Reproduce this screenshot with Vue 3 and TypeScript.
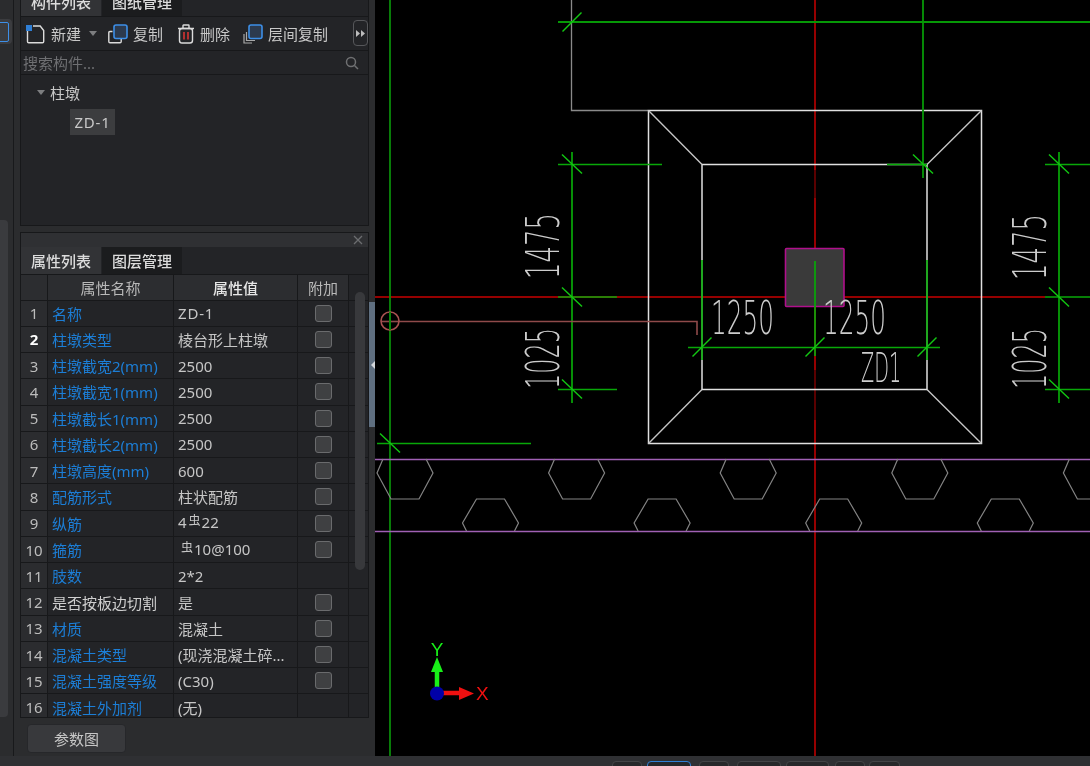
<script setup lang="ts">
interface Prop {
  name: string
  value: string
  blue: boolean
  check: boolean
  bar?: string
}

const props: Prop[] = [
  { name: '名称', value: 'ZD-1', blue: true, check: true },
  { name: '柱墩类型', value: '棱台形上柱墩', blue: true, check: true },
  { name: '柱墩截宽2(mm)', value: '2500', blue: true, check: true },
  { name: '柱墩截宽1(mm)', value: '2500', blue: true, check: true },
  { name: '柱墩截长1(mm)', value: '2500', blue: true, check: true },
  { name: '柱墩截长2(mm)', value: '2500', blue: true, check: true },
  { name: '柱墩高度(mm)', value: '600', blue: true, check: true },
  { name: '配筋形式', value: '柱状配筋', blue: true, check: true },
  { name: '纵筋', bar: '4', value: '22', blue: true, check: true },
  { name: '箍筋', bar: '', value: '10@100', blue: true, check: true },
  { name: '肢数', value: '2*2', blue: true, check: false },
  { name: '是否按板边切割', value: '是', blue: false, check: true },
  { name: '材质', value: '混凝土', blue: true, check: true },
  { name: '混凝土类型', value: '(现浇混凝土碎...', blue: true, check: true },
  { name: '混凝土强度等级', value: '(C30)', blue: true, check: true },
  { name: '混凝土外加剂', value: '(无)', blue: true, check: false },
]

// 六角形の穴（上段・下段）
const topHex = [405, 576.6, 748.2, 919.8, 1091.4]
const bottomHex = [490.5, 662.1, 833.7, 1005.3]

const hexTop = (c: number) =>
  `${c - 22},459 ${c - 28},473 ${c - 14},499 ${c + 14},499 ${c + 28},473 ${c + 21},459`
const hexBottom = (c: number) =>
  `${c - 24},531 ${c - 28},523 ${c - 14},499 ${c + 14},499 ${c + 28},523 ${c + 24},531`

const ticksBack = [
  [572, 164], [572, 297], [572, 389],
  [1059, 164], [1059, 297], [1059, 389],
  [923, 164], [390, 443],
]
const ticksFwd = [
  [702, 347], [815, 347], [927, 347], [572, 22],
]
const statusBtns = [
  { on: false }, { on: true }, { on: false }, { on: false },
  { on: false }, { on: false }, { on: false },
]
</script>

<template>
  <div class="app">
    <div class="main">
      <aside class="strip">
        <div class="strip-btn">
          <span class="strip-icon"></span>
        </div>
        <div class="strip-thumb"></div>
      </aside>

      <div class="side">
        <section class="panel panel-top">
          <div class="tabs tabs-cut">
            <span class="tab active">构件列表</span>
            <span class="tab">图纸管理</span>
          </div>
          <div class="toolbar">
            <span class="tool tool-new">
              <svg width="20" height="20" viewBox="0 0 20 20" fill="none">
                <path d="M2.5 6V17.5Q2.5 18.7 3.7 18.7H17.5Q18.7 18.7 18.7 17.5V6.5L15.2 2H8" stroke="#dcdcdc" stroke-width="1.4" />
                <rect x="1" y="1" width="6" height="6" fill="#2f7fd6" />
              </svg>
              新建
              <i class="caret"></i>
            </span>
            <span class="tool tool-copy">
              <svg width="20" height="20" viewBox="0 0 20 20" fill="none">
                <path d="M4.5 7.5H2Q0.8 7.5 0.8 8.7V17.5Q0.8 18.8 2 18.8H12Q13.2 18.8 13.2 17.5V15" stroke="#dcdcdc" stroke-width="1.4" />
                <rect x="6" y="1" width="13" height="13.5" rx="2" fill="#2c3a4e" stroke="#3d8fe8" stroke-width="1.6" />
              </svg>
              复制
            </span>
            <span class="tool tool-del">
              <svg width="18" height="20" viewBox="0 0 18 20" fill="none">
                <path d="M1 4.5H17M6 4V1.5Q6 1 6.5 1H11.5Q12 1 12 1.5V4" stroke="#dcdcdc" stroke-width="1.4" />
                <rect x="2.5" y="4.5" width="13" height="14.5" rx="2.5" stroke="#dcdcdc" stroke-width="1.4" />
                <path d="M7 8V15.5M11 8V15.5" stroke="#c23232" stroke-width="1.8" />
              </svg>
              删除
            </span>
            <span class="tool tool-layer">
              <svg width="20" height="20" viewBox="0 0 20 20" fill="none">
                <path d="M3.5 8V16.5H12M1 10V19H9" stroke="#a8a8a8" stroke-width="1.2" />
                <rect x="6" y="1" width="13" height="13.5" rx="2" fill="#2c3a4e" stroke="#3d8fe8" stroke-width="1.6" />
              </svg>
              层间复制
            </span>
            <span class="more">
              <svg width="9" height="7" viewBox="0 0 9 7"><path d="M0 0L4 3.5L0 7ZM5 0L9 3.5L5 7Z" fill="#bdbdbd" /></svg>
            </span>
          </div>
          <div class="search">
            <span class="search-text">搜索构件...</span>
            <svg width="14" height="14" viewBox="0 0 14 14" fill="none">
              <circle cx="6" cy="6" r="4.5" stroke="#6f7072" stroke-width="1.5" />
              <path d="M9.5 9.5L13 13" stroke="#6f7072" stroke-width="1.5" />
            </svg>
          </div>
          <div class="tree">
            <div class="tree-root"><i class="caret"></i>柱墩</div>
            <div class="tree-leaf"><span>ZD-1</span></div>
          </div>
        </section>

        <section class="panel panel-bottom">
          <div class="panel-head">
            <svg width="10" height="10" viewBox="0 0 10 10"><path d="M1 1L9 9M9 1L1 9" stroke="#6c6d70" stroke-width="1.3" /></svg>
          </div>
          <div class="tabs">
            <span class="tab active">属性列表</span>
            <span class="tab">图层管理</span>
          </div>
          <div class="table">
            <div class="row head">
              <div class="c-i"></div>
              <div class="c-n">属性名称</div>
              <div class="c-v">属性值</div>
              <div class="c-a">附加</div>
              <div class="c-s"></div>
            </div>
            <div v-for="(p, i) in props" :key="p.name" class="row">
              <div class="c-i" :class="{ cur: i === 1 }">{{ i + 1 }}</div>
              <div class="c-n" :class="{ blue: p.blue }">{{ p.name }}</div>
              <div class="c-v" :class="{ raised: p.bar !== undefined, wide: i === 0 }">
                <template v-if="p.bar !== undefined">{{ p.bar }}<span class="rebar" :class="{ lead: !p.bar }">虫</span></template>{{ p.value }}
              </div>
              <div class="c-a"><span v-if="p.check" class="check"></span></div>
              <div class="c-s"></div>
            </div>
            <div class="v-thumb"></div>
          </div>
          <div class="panel-foot">
            <button class="param-btn" type="button">参数图</button>
          </div>
        </section>
      </div>

      <div class="splitter">
        <div class="split-handle"><i></i></div>
      </div>

      <div class="canvas">
        <svg class="cad" width="715" height="756" viewBox="375 0 715 756" fill="none">
          <!-- 梁の外形 -->
          <path d="M571.5 0V110.5H648" stroke="#8a8a8a" stroke-width="1.3" />

          <!-- 軸線 -->
          <path d="M375 297H785M844 297H1045" stroke="#960000" stroke-width="2" />
          <path d="M815 0V756" stroke="#960000" stroke-width="2" />
          <path d="M815 170V198M815 370V420" stroke="#5a0000" stroke-width="2" />

          <!-- 柱墩 -->
          <rect x="648.5" y="110.5" width="333" height="333" stroke="#e0e0e0" stroke-width="1.5" />
          <rect x="702" y="164.5" width="225" height="225" stroke="#e0e0e0" stroke-width="1.5" />
          <path d="M648.5 110.5L702 164.5M981.5 110.5L927 164.5M648.5 443.5L702 389.5M981.5 443.5L927 389.5" stroke="#c4c4c4" stroke-width="1.4" />
          <rect x="785.5" y="248.5" width="58.5" height="58" rx="1" fill="#3a3a3a" stroke="#b0108c" stroke-width="1.6" />

          <!-- 寸法線 -->
          <path d="M558 22H1090" stroke="#069806" stroke-width="1.8" />
          <path d="M390 0V756" stroke="#0a8a0a" stroke-width="1.8" />
          <path d="M923 0V178" stroke="#069806" stroke-width="1.8" />
          <path d="M887 164.5H927" stroke="#08b008" stroke-width="1.5" />
          <path d="M572 152V403M558 164.5H662M558 297H617M558 389.5H617" stroke="#08a808" stroke-width="1.7" />
          <path d="M1059 152V403M1045 164.5H1090M1045 297H1090M1045 389.5H1090" stroke="#08a808" stroke-width="1.7" />
          <path d="M688 347.5H940" stroke="#08a808" stroke-width="1.6" />
          <path d="M702 260V360M927 260V360M815 261V356" stroke="#08a808" stroke-width="1.7" />
          <path d="M377 443.5H531" stroke="#08a808" stroke-width="1.6" />
          <path v-for="t in ticksBack" :key="'b' + t[0] + t[1]" :d="`M${t[0] - 10} ${t[1] - 9.5}L${t[0] + 10} ${t[1] + 9.5}`" stroke="#12c812" stroke-width="1.4" />
          <path v-for="t in ticksFwd" :key="'f' + t[0] + t[1]" :d="`M${t[0] - 9.5} ${t[1] + 9.5}L${t[0] + 9.5} ${t[1] - 9.5}`" stroke="#12c812" stroke-width="1.4" />

          <!-- 引出線 -->
          <path d="M399 321.5H697V335" stroke="#8f4a4a" stroke-width="1.6" />
          <path d="M381 321.5H399" stroke="#8f4a4a" stroke-width="1.6" />
          <circle cx="390" cy="321" r="9" stroke="#a85050" stroke-width="1.6" />
          <path d="M390 312V330" stroke="#0a8a0a" stroke-width="1.8" />

          <!-- スラブの線 -->
          <path d="M375 459.5H1090M375 531.5H1090" stroke="#a060b4" stroke-width="1.6" />
          <polyline v-for="c in topHex" :key="'t' + c" :points="hexTop(c)" stroke="#848484" stroke-width="1.2" />
          <polyline v-for="c in bottomHex" :key="'u' + c" :points="hexBottom(c)" stroke="#848484" stroke-width="1.2" />

          <!-- 寸法文字 -->
          <text class="dim" transform="translate(711 334) scale(1.03 1.95)">1250</text>
          <text class="dim" transform="translate(823 334) scale(1.03 1.95)">1250</text>
          <text class="dim" transform="translate(861 382) scale(0.8 1.7)">ZD1</text>
          <text class="dim" transform="translate(559 279) rotate(-90) scale(1.08 1.95)">1475</text>
          <text class="dim" transform="translate(559 389) rotate(-90) scale(1 1.95)">1025</text>
          <text class="dim" transform="translate(1046 280) rotate(-90) scale(1.08 1.95)">1475</text>
          <text class="dim" transform="translate(1046 389) rotate(-90) scale(1 1.95)">1025</text>

          <!-- 座標軸 -->
          <path d="M437 693V668" stroke="#18f018" stroke-width="4.5" />
          <path d="M437 657L431 672H443Z" fill="#18f018" />
          <path d="M437 693H461" stroke="#f01010" stroke-width="4.5" />
          <path d="M474 693.5L459 687V700Z" fill="#f01010" />
          <circle cx="437" cy="693.5" r="7" fill="#0000a8" />
          <text class="axis-y" x="437" y="656">Y</text>
          <text class="axis-x" x="476" y="700">X</text>
        </svg>
      </div>
    </div>

    <footer class="status">
      <span v-for="(b, i) in statusBtns" :key="i" class="status-btn" :class="[{ on: b.on }, `s${i}`]"></span>
    </footer>
  </div>
</template>

<style>
html,
body {
  margin: 0;
  background: #2b2c2e;
}
</style>

<style scoped>
.app {
  width: 1090px;
  height: 766px;
  overflow: hidden;
  display: flex;
  flex-direction: column;
  background: #2b2c2e;
  font-family: "Noto Sans", "Noto Sans CJK SC", "Liberation Sans", sans-serif;
  font-size: 15px;
  color: #cfcfcf;
  filter: blur(0.3px);
}

.main {
  flex: 1;
  min-height: 0;
  display: flex;
}

/* left strip */
.strip {
  position: relative;
  width: 14px;
  flex: none;
  border-right: 1px solid #18191b;
  box-sizing: border-box;
}
.strip-btn {
  margin-top: 19px;
  width: 12px;
  height: 25px;
  background: #3b3c3f;
  border-radius: 0 4px 4px 0;
  overflow: hidden;
}
.strip-icon {
  display: block;
  width: 11px;
  height: 18px;
  margin: 3px 0 0 -4px;
  border: 1px solid #3d8fe8;
  border-radius: 2px;
}
.strip-thumb {
  position: absolute;
  left: 0;
  top: 220px;
  width: 8px;
  height: 497px;
  background: #3a3b3e;
  border-radius: 0 4px 4px 0;
}

.side {
  width: 349px;
  margin-left: 6px;
  flex: none;
  display: flex;
  flex-direction: column;
  gap: 6px;
}

.panel {
  box-sizing: border-box;
  background: #232427;
  display: flex;
  flex-direction: column;
}
.panel-top {
  height: 226px;
  border: 1px solid #17181a;
  border-top: 0;
}
.panel-bottom {
  flex: 1;
  min-height: 0;
  background: transparent;
}

/* tabs */
.tabs {
  display: flex;
  height: 27px;
  flex: none;
  background: #232427;
}
.tabs-cut {
  height: 16px;
  align-items: flex-end;
  overflow: hidden;
}
.tab {
  width: 80px;
  height: 27px;
  flex: none;
  display: flex;
  align-items: center;
  justify-content: center;
  background: #1b1c1e;
  font-weight: 500;
  color: #dcdcdc;
  margin-right: 1px;
  box-sizing: border-box;
}
.tabs-cut .tab {
  padding-bottom: 3px;
}
.tab.active {
  background: #323336;
}

/* toolbar */
.toolbar {
  height: 35px;
  flex: none;
  display: flex;
  align-items: center;
  position: relative;
  border-top: 1px solid #17181a;
  border-bottom: 1px solid #17181a;
  box-sizing: border-box;
  color: #c8c8c8;
}
.tool {
  display: flex;
  align-items: center;
  flex: none;
}
.tool-new {
  margin-left: 4px;
  gap: 6px;
}
.tool-copy {
  margin-left: 11px;
  gap: 5px;
}
.tool-del {
  margin-left: 14px;
  gap: 5px;
}
.tool-layer {
  margin-left: 13px;
  gap: 5px;
}
.caret {
  display: inline-block;
  width: 0;
  height: 0;
  border-left: 4px solid transparent;
  border-right: 4px solid transparent;
  border-top: 5px solid #7d7e80;
}
.tool-new .caret {
  margin-left: 2px;
}
.more {
  position: absolute;
  left: 332px;
  top: 3px;
  width: 13px;
  height: 24px;
  border: 1px solid #56575a;
  border-radius: 4px;
  display: flex;
  align-items: center;
  justify-content: center;
}

/* search */
.search {
  height: 24px;
  flex: none;
  display: flex;
  align-items: center;
  justify-content: space-between;
  padding: 0 9px 0 2px;
  border-bottom: 1px solid #17181a;
  box-sizing: border-box;
}
.search-text {
  color: #6e6f72;
}

/* tree */
.tree {
  flex: 1;
  padding-top: 5px;
}
.tree-root {
  height: 24px;
  display: flex;
  align-items: center;
  gap: 5px;
  padding-left: 16px;
  color: #c8c8c8;
}
.tree-leaf {
  margin-top: 5px;
  padding-left: 49px;
}
.tree-leaf span {
  display: inline-block;
  width: 45px;
  height: 26px;
  line-height: 26px;
  text-align: center;
  letter-spacing: 0.8px;
  background: #3c3d3f;
  color: #c8c8c8;
}

/* lower panel */
.panel-head {
  height: 15px;
  flex: none;
  background: #2f3033;
  border: 1px solid #17181a;
  border-bottom: 0;
  box-sizing: border-box;
  display: flex;
  align-items: center;
  justify-content: flex-end;
  padding-right: 5px;
}
.panel-bottom .tabs {
  border-left: 1px solid #17181a;
  border-right: 1px solid #17181a;
}

.table {
  position: relative;
  flex: none;
  height: 444px;
  overflow: hidden;
  background: #232427;
  border: 1px solid #17181a;
  box-sizing: border-box;
}
.row {
  height: 26.27px;
  display: grid;
  grid-template-columns: 27px 126px 124px 51px 19px;
  box-sizing: border-box;
  border-bottom: 1px solid #17181a;
}
.row > div {
  display: flex;
  align-items: center;
  border-right: 1px solid #17181a;
  box-sizing: border-box;
  min-width: 0;
  white-space: pre;
}
.row .c-s {
  border-right: 0;
}
.c-i {
  background: #2b2c2f;
  justify-content: center;
  color: #bcbcbc;
}
.c-i.cur {
  color: #fff;
  font-weight: 700;
}
.c-n {
  padding-left: 4px;
  color: #cfcfcf;
}
.c-n.blue {
  color: #1c7ed6;
}
.c-v {
  padding-left: 4px;
  color: #c6c6c6;
}
.c-v.wide {
  letter-spacing: 0.8px;
}
.c-v.raised {
  padding-bottom: 2px;
}
.rebar {
  font-size: 12px;
  margin: 0 1px 0 2px;
  position: relative;
  top: -2px;
}
.rebar.lead {
  margin-left: 3px;
}
.c-a {
  justify-content: center;
}
.check {
  width: 17px;
  height: 17px;
  box-sizing: border-box;
  background: #3f4042;
  border: 1px solid #6a6b6d;
  border-radius: 3px;
}
.head {
  height: 25.5px;
}
.head > div {
  background: #2c2d30;
  justify-content: center;
  color: #b9b9b9;
}
.head .c-n,
.head .c-v {
  padding-left: 0;
}
.head .c-v {
  color: #e6e6e6;
  font-weight: 500;
}
.head .c-s {
  background: #232427;
}
.v-thumb {
  position: absolute;
  left: 334px;
  top: 17px;
  width: 10px;
  height: 278px;
  background: #38393c;
  border-radius: 5px;
}

.panel-foot {
  flex: 1;
  padding: 6px 0 0 7px;
}
.param-btn {
  width: 99px;
  height: 29px;
  padding: 0;
  background: #38393c;
  border: 1px solid #26272a;
  border-radius: 4px;
  color: #c6c6c6;
  font: inherit;
}

/* splitter */
.splitter {
  width: 6px;
  flex: none;
  display: flex;
  align-items: center;
}
.split-handle {
  width: 6px;
  height: 125px;
  margin-bottom: 27px;
  background: #5f6f80;
  display: flex;
  align-items: center;
  justify-content: flex-end;
}
.split-handle i {
  width: 0;
  height: 0;
  border-top: 4px solid transparent;
  border-bottom: 4px solid transparent;
  border-right: 4px solid #d4d8dc;
}

/* canvas */
.canvas {
  flex: 1;
  min-width: 0;
  background: #000;
}
.cad {
  display: block;
}
.dim {
  font-family: "DejaVu Sans", sans-serif;
  font-weight: 200;
  font-size: 24px;
  fill: #cccccc;
}
.axis-y,
.axis-x {
  font-family: "Liberation Sans", sans-serif;
  font-size: 19px;
}
.axis-y {
  fill: #18f018;
  text-anchor: middle;
}
.axis-x {
  fill: #f01010;
}

/* status bar */
.status {
  height: 10px;
  flex: none;
  background: #2f3033;
  display: flex;
  align-items: flex-start;
  padding: 5px 0 0 612px;
  box-sizing: border-box;
}
.status-btn {
  height: 10px;
  flex: none;
  background: #27282a;
  border: 1px solid #434446;
  border-radius: 4px 4px 0 0;
  box-sizing: border-box;
}
.status-btn.on {
  border-color: #2f7fd6;
}
.s0 { width: 30px; }
.s1 { width: 44px; margin-left: 5px; }
.s2 { width: 30px; margin-left: 8px; }
.s3 { width: 44px; margin-left: 8px; }
.s4 { width: 43px; margin-left: 5px; }
.s5 { width: 30px; margin-left: 6px; }
.s6 { width: 31px; margin-left: 4px; }
</style>
